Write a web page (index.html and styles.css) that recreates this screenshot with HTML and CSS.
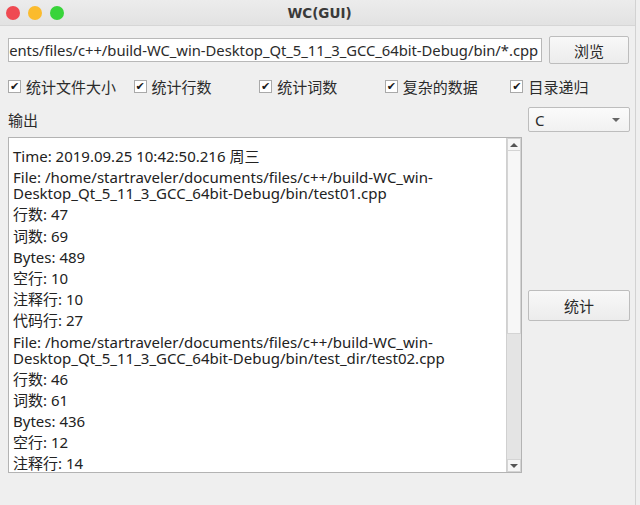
FILE: index.html
```html
<!DOCTYPE html>
<html lang="zh">
<head>
<meta charset="utf-8">
<title>WC(GUI)</title>
<link rel="stylesheet" href="styles.css">
</head>
<body>
<div class="window">
  <div class="titlebar">
    <div class="lights">
      <span class="light red"></span>
      <span class="light yellow"></span>
      <span class="light green"></span>
    </div>
    <div class="title">WC(GUI)</div>
  </div>
  <div class="content">
    <div class="pathrow">
      <div class="input"><span>ents/files/c++/build-WC_win-Desktop_Qt_5_11_3_GCC_64bit-Debug/bin/*.cpp</span></div>
      <div class="button browse">浏览</div>
    </div>
    <div class="checks">
      <label class="check"><span class="box">✔</span>统计文件大小</label>
      <label class="check"><span class="box">✔</span>统计行数</label>
      <label class="check"><span class="box">✔</span>统计词数</label>
      <label class="check"><span class="box">✔</span>复杂的数据</label>
      <label class="check"><span class="box">✔</span>目录递归</label>
    </div>
    <div class="main">
      <div class="outlabel">输出</div>
      <div class="combo"><span>C</span><span class="caret"></span></div>
      <div class="textedit">
        <div class="text">
          <p>Time: 2019.09.25 10:42:50.216 周三</p>
          <p>File: /home/startraveler/documents/files/c++/build-WC_win-<br>Desktop_Qt_5_11_3_GCC_64bit-Debug/bin/test01.cpp</p>
          <p>行数: 47</p>
          <p>词数: 69</p>
          <p>Bytes: 489</p>
          <p>空行: 10</p>
          <p>注释行: 10</p>
          <p>代码行: 27</p>
          <p>File: /home/startraveler/documents/files/c++/build-WC_win-<br>Desktop_Qt_5_11_3_GCC_64bit-Debug/bin/test_dir/test02.cpp</p>
          <p>行数: 46</p>
          <p>词数: 61</p>
          <p>Bytes: 436</p>
          <p>空行: 12</p>
          <p>注释行: 14</p>
          <p>代码行: 30</p>
        </div>
        <div class="scrollbar">
          <div class="arrow up"></div>
          <div class="thumb"></div>
          <div class="track"></div>
          <div class="arrow down"></div>
        </div>
      </div>
      <div class="side">
        <div class="button count">统计</div>
      </div>
    </div>
  </div>
</div>
</body>
</html>
```
FILE: styles.css
```css
* { box-sizing: border-box; }
html, body { margin: 0; padding: 0; }
body {
  width: 640px;
  height: 505px;
  overflow: hidden;
  background: #efefef;
  font-family: "Noto Sans", "Noto Sans CJK SC", sans-serif;
  font-size: 14px;
  color: #2b2b2b;
}
.window {
  height: 505px;
  width: 636px;
  display: flex;
  flex-direction: column;
  border-right: 1px solid #d2d2d2;
}
.titlebar {
  height: 26px;
  flex: none;
  display: flex;
  align-items: center;
  background: linear-gradient(#ececec, #e2e2e2);
  border-bottom: 1px solid #d6d6d6;
  position: relative;
}
.lights {
  display: flex;
  gap: 8px;
  padding-left: 6px;
}
.light {
  width: 14px;
  height: 14px;
  border-radius: 50%;
  display: block;
}
.red { background: #ef4a52; }
.yellow { background: #fbbb2d; }
.green { background: #38d43a; }
.title {
  position: absolute;
  left: 0;
  right: -4px;
  text-align: center;
  font-weight: bold;
  color: #3a3a3a;
  font-family: "DejaVu Sans", sans-serif;
  font-size: 13.5px;
}
.content {
  padding: 10px 6px 0 8px;
  display: flex;
  flex-direction: column;
}
.pathrow {
  display: flex;
  align-items: center;
  gap: 7px;
  height: 28px;
}
.input {
  width: 535px;
  height: 24px;
  background: #fff;
  border: 1px solid #b8b8b8;
  display: flex;
  justify-content: flex-end;
  align-items: center;
  overflow: hidden;
  white-space: nowrap;
  padding-right: 3px;
  font-size: 14.8px;
  letter-spacing: -0.03px;
}
.button {
  background: linear-gradient(#f8f8f8, #ececec);
  border: 1px solid #bdbdbd;
  border-radius: 2px;
  display: flex;
  align-items: center;
  justify-content: center;
  font-size: 15px;
  color: #2b2b2b;
}
.browse {
  width: 80px;
  height: 28px;
}
.checks {
  display: grid;
  grid-template-columns: repeat(5, 125.6px);
  margin-top: 12px;
  height: 20px;
  align-items: center;
}
.check {
  display: flex;
  align-items: center;
  gap: 5px;
  font-size: 15px;
  white-space: nowrap;
}
.box {
  width: 13px;
  height: 13px;
  border: 1px solid #a9a9a9;
  background: #fff;
  display: flex;
  align-items: center;
  justify-content: center;
  font-size: 11px;
  line-height: 1;
  color: #1a1a1a;
  font-family: "DejaVu Sans", sans-serif;
  font-weight: bold;
}
.main {
  display: grid;
  grid-template-columns: 514px 102px;
  grid-template-rows: 25px 336px;
  column-gap: 6px;
  row-gap: 5px;
  margin-top: 11px;
}
.outlabel {
  font-size: 15px;
  display: flex;
  align-items: center;
}
.combo {
  background: linear-gradient(#fbfbfb, #f1f1f1);
  border: 1px solid #bdbdbd;
  border-radius: 2px;
  display: flex;
  align-items: center;
  justify-content: space-between;
  padding: 0 9px 0 6px;
  font-size: 15px;
}
.caret {
  width: 0;
  height: 0;
  border-left: 4px solid transparent;
  border-right: 4px solid transparent;
  border-top: 4px solid #666;
}
.textedit {
  border: 1px solid #b3b3b3;
  background: #fff;
  display: flex;
  overflow: hidden;
}
.text {
  flex: 1;
  padding: 10px 4px 0 4px;
  overflow: hidden;
  font-size: 15px;
  line-height: 16px;
  color: #222;
}
.text p {
  margin: 0 0 5.2px 0;
  white-space: nowrap;
}
.scrollbar {
  width: 15px;
  flex: none;
  display: flex;
  flex-direction: column;
  border-left: 1px solid #d0d0d0;
  background: #e4e4e4;
}
.arrow {
  height: 13px;
  flex: none;
  background: #f6f6f6;
  border: 1px solid #d4d4d4;
  display: flex;
  align-items: center;
  justify-content: center;
}
.arrow::after {
  content: "";
  width: 0;
  height: 0;
  border-left: 4px solid transparent;
  border-right: 4px solid transparent;
}
.arrow.up::after { border-bottom: 4px solid #555; }
.arrow.down::after { border-top: 4px solid #555; }
.thumb {
  height: 183px;
  flex: none;
  background: #f7f7f7;
  border: 1px solid #d4d4d4;
  border-top: none;
}
.track { flex: 1; }
.side {
  display: flex;
  align-items: center;
}
.count {
  width: 102px;
  height: 31px;
}
```
